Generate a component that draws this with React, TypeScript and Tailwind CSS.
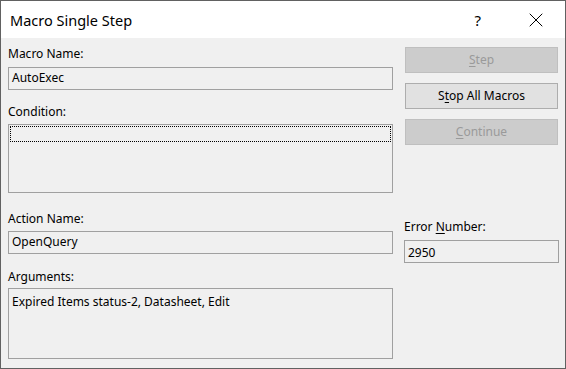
import { X } from 'lucide-react';

const font = { fontFamily: '"Noto Sans", "Liberation Sans", sans-serif' };

const Label = ({ children, className = '' }: { children: React.ReactNode; className?: string }) => (
  <div className={`h-4 text-[12px] leading-4 text-black ${className}`}>{children}</div>
);

const Field = ({ value, className = '' }: { value?: string; className?: string }) => (
  <div className={`border border-[#a0a0a0] bg-[#f0f0f0] pl-[3px] pt-[2px] text-[12px] leading-4 text-black ${className}`}>
    {value}
  </div>
);

const App = () => {
  return (
    <div className="flex h-[369px] w-[566px] flex-col border border-[#616161] bg-[#f0f0f0]" style={font}>
      {/* title bar */}
      <div className="flex h-[37px] shrink-0 items-center bg-white">
        <span className="ml-[9px] text-[14.5px] leading-5 text-black">Macro Single Step</span>
        <span className="ml-auto mr-[43px] text-[15px] leading-5 text-black">?</span>
        <X size={24} strokeWidth={1} className="mr-[17px] text-black" />
      </div>

      <div className="flex flex-1">
        {/* left column */}
        <div className="ml-[7px] flex w-[385px] flex-col pt-[8px]">
          <Label>Macro Name:</Label>
          <Field value="AutoExec" className="mt-[5px] h-[23px]" />

          <Label className="mt-[14px]">Condition:</Label>
          <div className="mt-[4px] h-[69px] border border-[#a0a0a0] p-px">
            <div className="h-4 border border-dotted border-black" />
          </div>

          <Label className="mt-[18px]">Action Name:</Label>
          <Field value="OpenQuery" className="mt-[4px] h-[23px]" />

          <Label className="mt-[15px]">Arguments:</Label>
          <Field value="Expired Items status-2, Datasheet, Edit" className="mt-[3px] h-[71px] pt-[5px]" />
        </div>

        {/* right column */}
        <div className="ml-[11px] flex w-[155px] flex-col pt-[9px]">
          <button className="mx-px h-[26px] border border-[#bfbfbf] bg-[#cccccc] text-[12px] text-[#9a9a9a]">
            <span className="underline underline-offset-2">S</span>tep
          </button>
          <button className="mx-px mt-[10px] h-[26px] border border-[#adadad] bg-[#e1e1e1] text-[12px] text-black">
            S<span className="underline underline-offset-2">t</span>op All Macros
          </button>
          <button className="mx-px mt-[10px] h-[26px] border border-[#bfbfbf] bg-[#cccccc] text-[12px] text-[#9a9a9a]">
            <span className="underline underline-offset-2">C</span>ontinue
          </button>

          <Label className="mt-[74px]">
            Error <span className="underline underline-offset-2">N</span>umber:
          </Label>
          <Field value="2950" className="mt-[5px] h-[23px] pt-[4px]" />
        </div>
      </div>
    </div>
  );
};

export default App;
